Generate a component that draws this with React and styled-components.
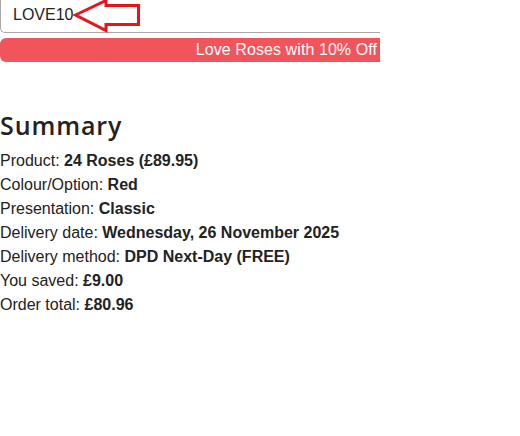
import React from "react";
import styled, { createGlobalStyle } from "styled-components";

const Global = createGlobalStyle`
  html, body { margin: 0; padding: 0; background: #fff; }
  body { font-family: "Liberation Sans", Arial, sans-serif; color: #222; }
`;

const Page = styled.div`
  width: 520px;
  height: 436px;
  overflow: hidden;
`;

const Column = styled.div`
  width: 380px;
  display: flex;
  flex-direction: column;
`;

const CodeField = styled.div`
  position: relative;
  height: 33px;
  box-sizing: border-box;
  border-left: 1px solid #a9a9a9;
  border-bottom: 1px solid #a9a9a9;
  border-bottom-left-radius: 5px;
  padding: 3px 0 0 12px;
  font-size: 16px;
  line-height: 24px;
  color: #222;
`;

const Arrow = styled.svg`
  position: absolute;
  left: 70px;
  top: -2px;
`;

const Banner = styled.div`
  margin-top: 5px;
  height: 24px;
  background: #f2545b;
  border-radius: 6px 0 0 6px;
  color: #fff;
  font-size: 16px;
  line-height: 24px;
  text-align: right;
  padding-right: 3px;
  letter-spacing: 0.08px;
`;

const Heading = styled.h2`
  margin: 47px 0 8px 0;
  font-family: "Open Sans", "Noto Sans", sans-serif;
  font-weight: 600;
  font-size: 25px;
  line-height: 32px;
  color: #222;
  letter-spacing: 0.9px;
`;

const Row = styled.div`
  font-size: 16px;
  line-height: 24px;
  color: #222;
  white-space: nowrap;
`;

const Value = styled.b`
  font-weight: 700;
`;

const rows = [
  ["Product", "24 Roses (£89.95)"],
  ["Colour/Option", "Red"],
  ["Presentation", "Classic"],
  ["Delivery date", "Wednesday, 26 November 2025"],
  ["Delivery method", "DPD Next-Day (FREE)"],
  ["You saved", "£9.00"],
  ["Order total", "£80.96"],
];

export default function App() {
  return (
    <Page>
      <Global />
      <Column>
        <CodeField>
          LOVE10
          <Arrow width="72" height="38" viewBox="0 0 72 38">
            <polygon
              points="4.5,17 35,2.5 35,7.5 67.5,7.5 67.5,26.5 35,26.5 35,32.5"
              fill="none"
              stroke="#e8141c"
              strokeWidth="3"
              strokeLinejoin="miter"
            />
          </Arrow>
        </CodeField>
        <Banner>Love Roses with 10% Off</Banner>
      </Column>
      <Heading>Summary</Heading>
      {rows.map(([k, v]) => (
        <Row key={k}>
          {k}: <Value>{v}</Value>
        </Row>
      ))}
    </Page>
  );
}
